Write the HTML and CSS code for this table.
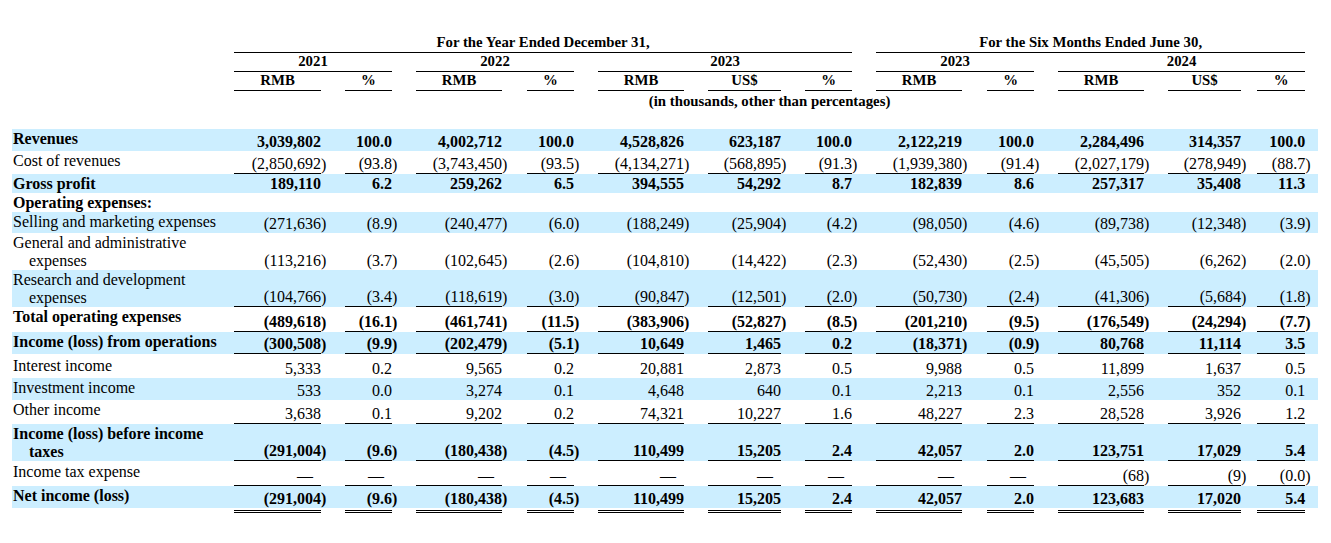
FILE: index.html
```html
<!DOCTYPE html>
<html lang="en">
<head>
<meta charset="utf-8">
<title>Consolidated Statements of Operations</title>
<link rel="stylesheet" href="styles.css">
</head>
<body>
<table class="stmt">
<colgroup>
<col class="w222">
<col class="w87"><col class="w24">
<col class="w47"><col class="w24">
<col class="w86"><col class="w25">
<col class="w47"><col class="w24">
<col class="w86"><col class="w24">
<col class="w73"><col class="w24">
<col class="w47"><col class="w24">
<col class="w86"><col class="w25">
<col class="w47"><col class="w24">
<col class="w86"><col class="w24">
<col class="w73"><col class="w16">
<col class="w48"><col class="w13">
</colgroup>
<thead>
<tr><th></th><th colspan="13" class="ul">For the Year Ended December 31,</th><th></th><th colspan="9" class="ul">For the Six Months Ended June 30,</th><th></th></tr>
<tr><th></th><th colspan="3" class="ul">2021</th><th></th><th colspan="3" class="ul">2022</th><th></th><th colspan="5" class="ul">2023</th><th></th><th colspan="3" class="ul">2023</th><th></th><th colspan="5" class="ul">2024</th><th></th></tr>
<tr><th></th><th class="ul">RMB</th><th></th><th class="ul">%</th><th></th><th class="ul">RMB</th><th></th><th class="ul">%</th><th></th><th class="ul">RMB</th><th></th><th class="ul">US$</th><th></th><th class="ul">%</th><th></th><th class="ul">RMB</th><th></th><th class="ul">%</th><th></th><th class="ul">RMB</th><th></th><th class="ul">US$</th><th></th><th class="ul">%</th><th></th></tr>
<tr><th></th><th colspan="23" class="units">(in thousands, other than percentages)</th><th></th></tr>
</thead>
<tbody>
<tr class="sh b h22"><td class="lbl">Revenues</td><td class="n">3,039,802</td><td class="p"></td><td class="n">100.0</td><td class="p"></td><td class="n">4,002,712</td><td class="p"></td><td class="n">100.0</td><td class="p"></td><td class="n">4,528,826</td><td class="p"></td><td class="n">623,187</td><td class="p"></td><td class="n">100.0</td><td class="p"></td><td class="n">2,122,219</td><td class="p"></td><td class="n">100.0</td><td class="p"></td><td class="n">2,284,496</td><td class="p"></td><td class="n">314,357</td><td class="p"></td><td class="n">100.0</td><td class="p"></td></tr>
<tr class="ul h23"><td class="lbl">Cost of revenues</td><td class="n">(2,850,692</td><td class="p">)</td><td class="n">(93.8</td><td class="p">)</td><td class="n">(3,743,450</td><td class="p">)</td><td class="n">(93.5</td><td class="p">)</td><td class="n">(4,134,271</td><td class="p">)</td><td class="n">(568,895</td><td class="p">)</td><td class="n">(91.3</td><td class="p">)</td><td class="n">(1,939,380</td><td class="p">)</td><td class="n">(91.4</td><td class="p">)</td><td class="n">(2,027,179</td><td class="p">)</td><td class="n">(278,949</td><td class="p">)</td><td class="n">(88.7</td><td class="p">)</td></tr>
<tr class="sh b h19"><td class="lbl">Gross profit</td><td class="n">189,110</td><td class="p"></td><td class="n">6.2</td><td class="p"></td><td class="n">259,262</td><td class="p"></td><td class="n">6.5</td><td class="p"></td><td class="n">394,555</td><td class="p"></td><td class="n">54,292</td><td class="p"></td><td class="n">8.7</td><td class="p"></td><td class="n">182,839</td><td class="p"></td><td class="n">8.6</td><td class="p"></td><td class="n">257,317</td><td class="p"></td><td class="n">35,408</td><td class="p"></td><td class="n">11.3</td><td class="p"></td></tr>
<tr class="b h18"><td class="lbl">Operating expenses:</td><td class="n"></td><td class="p"></td><td class="n"></td><td class="p"></td><td class="n"></td><td class="p"></td><td class="n"></td><td class="p"></td><td class="n"></td><td class="p"></td><td class="n"></td><td class="p"></td><td class="n"></td><td class="p"></td><td class="n"></td><td class="p"></td><td class="n"></td><td class="p"></td><td class="n"></td><td class="p"></td><td class="n"></td><td class="p"></td><td class="n"></td><td class="p"></td></tr>
<tr class="sh h21"><td class="lbl">Selling and marketing expenses</td><td class="n">(271,636</td><td class="p">)</td><td class="n">(8.9</td><td class="p">)</td><td class="n">(240,477</td><td class="p">)</td><td class="n">(6.0</td><td class="p">)</td><td class="n">(188,249</td><td class="p">)</td><td class="n">(25,904</td><td class="p">)</td><td class="n">(4.2</td><td class="p">)</td><td class="n">(98,050</td><td class="p">)</td><td class="n">(4.6</td><td class="p">)</td><td class="n">(89,738</td><td class="p">)</td><td class="n">(12,348</td><td class="p">)</td><td class="n">(3.9</td><td class="p">)</td></tr>
<tr class="h37"><td class="lbl">General and administrative expenses</td><td class="n">(113,216</td><td class="p">)</td><td class="n">(3.7</td><td class="p">)</td><td class="n">(102,645</td><td class="p">)</td><td class="n">(2.6</td><td class="p">)</td><td class="n">(104,810</td><td class="p">)</td><td class="n">(14,422</td><td class="p">)</td><td class="n">(2.3</td><td class="p">)</td><td class="n">(52,430</td><td class="p">)</td><td class="n">(2.5</td><td class="p">)</td><td class="n">(45,505</td><td class="p">)</td><td class="n">(6,262</td><td class="p">)</td><td class="n">(2.0</td><td class="p">)</td></tr>
<tr class="sh ul h37"><td class="lbl">Research and development expenses</td><td class="n">(104,766</td><td class="p">)</td><td class="n">(3.4</td><td class="p">)</td><td class="n">(118,619</td><td class="p">)</td><td class="n">(3.0</td><td class="p">)</td><td class="n">(90,847</td><td class="p">)</td><td class="n">(12,501</td><td class="p">)</td><td class="n">(2.0</td><td class="p">)</td><td class="n">(50,730</td><td class="p">)</td><td class="n">(2.4</td><td class="p">)</td><td class="n">(41,306</td><td class="p">)</td><td class="n">(5,684</td><td class="p">)</td><td class="n">(1.8</td><td class="p">)</td></tr>
<tr class="b ul h25"><td class="lbl">Total operating expenses</td><td class="n">(489,618</td><td class="p">)</td><td class="n">(16.1</td><td class="p">)</td><td class="n">(461,741</td><td class="p">)</td><td class="n">(11.5</td><td class="p">)</td><td class="n">(383,906</td><td class="p">)</td><td class="n">(52,827</td><td class="p">)</td><td class="n">(8.5</td><td class="p">)</td><td class="n">(201,210</td><td class="p">)</td><td class="n">(9.5</td><td class="p">)</td><td class="n">(176,549</td><td class="p">)</td><td class="n">(24,294</td><td class="p">)</td><td class="n">(7.7</td><td class="p">)</td></tr>
<tr class="sh b ul h22"><td class="lbl">Income (loss) from operations</td><td class="n">(300,508</td><td class="p">)</td><td class="n">(9.9</td><td class="p">)</td><td class="n">(202,479</td><td class="p">)</td><td class="n">(5.1</td><td class="p">)</td><td class="n">10,649</td><td class="p"></td><td class="n">1,465</td><td class="p"></td><td class="n">0.2</td><td class="p"></td><td class="n">(18,371</td><td class="p">)</td><td class="n">(0.9</td><td class="p">)</td><td class="n">80,768</td><td class="p"></td><td class="n">11,114</td><td class="p"></td><td class="n">3.5</td><td class="p"></td></tr>
<tr class="h24 lowlbl"><td class="lbl">Interest income</td><td class="n">5,333</td><td class="p"></td><td class="n">0.2</td><td class="p"></td><td class="n">9,565</td><td class="p"></td><td class="n">0.2</td><td class="p"></td><td class="n">20,881</td><td class="p"></td><td class="n">2,873</td><td class="p"></td><td class="n">0.5</td><td class="p"></td><td class="n">9,988</td><td class="p"></td><td class="n">0.5</td><td class="p"></td><td class="n">11,899</td><td class="p"></td><td class="n">1,637</td><td class="p"></td><td class="n">0.5</td><td class="p"></td></tr>
<tr class="sh h22"><td class="lbl">Investment income</td><td class="n">533</td><td class="p"></td><td class="n">0.0</td><td class="p"></td><td class="n">3,274</td><td class="p"></td><td class="n">0.1</td><td class="p"></td><td class="n">4,648</td><td class="p"></td><td class="n">640</td><td class="p"></td><td class="n">0.1</td><td class="p"></td><td class="n">2,213</td><td class="p"></td><td class="n">0.1</td><td class="p"></td><td class="n">2,556</td><td class="p"></td><td class="n">352</td><td class="p"></td><td class="n">0.1</td><td class="p"></td></tr>
<tr class="ul h24"><td class="lbl">Other income</td><td class="n">3,638</td><td class="p"></td><td class="n">0.1</td><td class="p"></td><td class="n">9,202</td><td class="p"></td><td class="n">0.2</td><td class="p"></td><td class="n">74,321</td><td class="p"></td><td class="n">10,227</td><td class="p"></td><td class="n">1.6</td><td class="p"></td><td class="n">48,227</td><td class="p"></td><td class="n">2.3</td><td class="p"></td><td class="n">28,528</td><td class="p"></td><td class="n">3,926</td><td class="p"></td><td class="n">1.2</td><td class="p"></td></tr>
<tr class="sh b ul h37"><td class="lbl">Income (loss) before income taxes</td><td class="n">(291,004</td><td class="p">)</td><td class="n">(9.6</td><td class="p">)</td><td class="n">(180,438</td><td class="p">)</td><td class="n">(4.5</td><td class="p">)</td><td class="n">110,499</td><td class="p"></td><td class="n">15,205</td><td class="p"></td><td class="n">2.4</td><td class="p"></td><td class="n">42,057</td><td class="p"></td><td class="n">2.0</td><td class="p"></td><td class="n">123,751</td><td class="p"></td><td class="n">17,029</td><td class="p"></td><td class="n">5.4</td><td class="p"></td></tr>
<tr class="ul h25 midlbl"><td class="lbl">Income tax expense</td><td class="n dash">—</td><td class="p"></td><td class="n dash">—</td><td class="p"></td><td class="n dash">—</td><td class="p"></td><td class="n dash">—</td><td class="p"></td><td class="n dash">—</td><td class="p"></td><td class="n dash">—</td><td class="p"></td><td class="n dash">—</td><td class="p"></td><td class="n dash">—</td><td class="p"></td><td class="n dash">—</td><td class="p"></td><td class="n">(68</td><td class="p">)</td><td class="n">(9</td><td class="p">)</td><td class="n">(0.0</td><td class="p">)</td></tr>
<tr class="sh b h22"><td class="lbl">Net income (loss)</td><td class="n">(291,004</td><td class="p">)</td><td class="n">(9.6</td><td class="p">)</td><td class="n">(180,438</td><td class="p">)</td><td class="n">(4.5</td><td class="p">)</td><td class="n">110,499</td><td class="p"></td><td class="n">15,205</td><td class="p"></td><td class="n">2.4</td><td class="p"></td><td class="n">42,057</td><td class="p"></td><td class="n">2.0</td><td class="p"></td><td class="n">123,683</td><td class="p"></td><td class="n">17,020</td><td class="p"></td><td class="n">5.4</td><td class="p"></td></tr>
<tr class="dbl"><td></td><td class="n"></td><td></td><td class="n"></td><td></td><td class="n"></td><td></td><td class="n"></td><td></td><td class="n"></td><td></td><td class="n"></td><td></td><td class="n"></td><td></td><td class="n"></td><td></td><td class="n"></td><td></td><td class="n"></td><td></td><td class="n"></td><td></td><td class="n"></td><td></td></tr>
</tbody>
</table>
</body>
</html>
```
FILE: styles.css
```css
html, body {
  margin: 0;
  padding: 0;
  background: #ffffff;
}

body {
  font-family: "Liberation Serif", "Times New Roman", serif;
  color: #000000;
}

.stmt {
  border-collapse: separate;
  border-spacing: 0;
  table-layout: fixed;
  width: 1306px;
  margin: 34px 0 0 12px;
  font-size: 16px;
  line-height: 18px;
}

.stmt th,
.stmt td {
  padding: 0;
}

/* column widths */
.w222 { width: 222px; }
.w87 { width: 87px; }
.w86 { width: 86px; }
.w73 { width: 73px; }
.w48 { width: 48px; }
.w47 { width: 47px; }
.w25 { width: 25px; }
.w24 { width: 24px; }
.w16 { width: 16px; }
.w13 { width: 13px; }

/* header */
.stmt thead th {
  font-size: 14.8px;
  line-height: 17px;
  font-weight: bold;
  text-align: center;
  vertical-align: bottom;
  padding-bottom: 1px;
  white-space: nowrap;
}

.stmt thead th.ul {
  border-bottom: 1px solid #000000;
}

.stmt thead th.units {
  vertical-align: top;
  padding-top: 2px;
  padding-bottom: 19px;
}

/* body */
.stmt tbody td {
  vertical-align: bottom;
  white-space: nowrap;
}

.stmt tbody td.lbl {
  vertical-align: top;
  white-space: normal;
  padding-top: 1px;
  padding-left: 17px;
  text-indent: -16px;
}

.stmt tr.lowlbl td.lbl {
  padding-top: 3px;
}

.stmt tr.midlbl td.lbl {
  padding-top: 2px;
}

.stmt td.n {
  text-align: right;
}

.stmt td.p {
  text-align: left;
}

.stmt td.dash {
  padding-right: 8px;
}

.stmt tr.sh td {
  background: #cceeff;
}

.stmt tr.b td {
  font-weight: bold;
}

.stmt tr.ul td.n {
  border-bottom: 1px solid #000000;
}

.stmt tr.dbl {
  height: 5px;
}

.stmt tr.dbl td {
  font-size: 0;
  line-height: 0;
}

.stmt tr.dbl td.n {
  border-bottom: 3px double #000000;
}

/* row heights */
.h18 { height: 18px; }
.h19 { height: 19px; }
.h21 { height: 21px; }
.h22 { height: 22px; }
.h23 { height: 23px; }
.h24 { height: 24px; }
.h25 { height: 25px; }
.h37 { height: 37px; }
```
